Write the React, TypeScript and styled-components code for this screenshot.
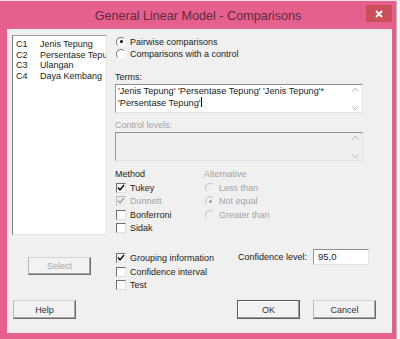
import React from 'react';
import styled, { createGlobalStyle } from 'styled-components';

const GlobalStyle = createGlobalStyle`
    html, body {
        margin: 0;
        padding: 0;
    }
    body {
        width: 400px;
        height: 339px;
        overflow: hidden;
        background: #e6608e;
        font-family: "Liberation Sans", Arial, sans-serif;
        font-size: 9px;
        color: #222;
    }
`;

const Screen = styled.div`
    display: flex;
    flex-direction: column;
    width: 400px;
    height: 339px;
`;

const TopEdge = styled.div`
    height: 1px;
    background: #eee3e8;
`;

const Row = styled.div`
    display: flex;
    flex: 1;
`;

const Frame = styled.div`
    width: 396px;
    display: flex;
    flex-direction: column;
    background: #e6608e;
`;

const OuterStrip = styled.div`
    flex: 1;
    border-left: 1px solid #b9b1b5;
    background: #f3f1f2;
`;

const TitleBar = styled.div`
    height: 28px;
    display: grid;
    grid-template-columns: 1fr auto 1fr;
    align-items: center;
`;

const Title = styled.div`
    grid-column: 2;
    font-size: 12.6px;
    color: #5e2a40;
    padding-top: 1px;
`;

const CloseButton = styled.div`
    justify-self: end;
    align-self: start;
    margin-top: 4px;
    margin-right: 4px;
    width: 26px;
    height: 17px;
    background: #c9505a;
    color: #fff;
    display: flex;
    align-items: center;
    justify-content: center;
`;

const Client = styled.div`
    flex: 1;
    margin: 0 4px 6px 7px;
    background: #f0f0f0;
    display: flex;
    flex-direction: column;
`;

const Main = styled.div`
    height: 271px;
    box-sizing: border-box;
    padding: 6px 0 0 5px;
    display: flex;
`;

const LeftCol = styled.div`
    width: 95px;
    display: flex;
    flex-direction: column;
`;

const ListBox = styled.div`
    height: 200px;
    box-sizing: border-box;
    background: #fff;
    border: 1px solid;
    border-color: #9c9c9c #e2e2e2 #e2e2e2 #7c7c7c;
    padding: 3px 0 0 3px;
    overflow: hidden;
`;

const ListItem = styled.div`
    display: grid;
    grid-template-columns: 24px 1fr;
    line-height: 10.5px;
    white-space: nowrap;
    overflow: hidden;
    font-size: 9px;
`;

const Button = styled.div<{ $default?: boolean; $disabled?: boolean }>`
    width: 63px;
    height: 19px;
    box-sizing: border-box;
    display: flex;
    align-items: center;
    justify-content: center;
    background: #f2f2f2;
    border: 1px solid;
    border-color: ${p => (p.$default ? '#5a5a5a' : '#d4d4d4 #6c6c6c #6c6c6c #b8b8b8')};
    box-shadow: ${p => (p.$default ? 'inset -1px -1px 0 #9a9a9a, inset 1px 1px 0 #fff' : 'inset -1px -1px 0 #a6a6a6')};
    color: ${p => (p.$disabled ? '#a5a5a5' : '#333')};
`;

const SelectButton = styled(Button)`
    height: 18px;
    margin: 22px 0 0 16px;
`;

const RightCol = styled.div`
    margin-left: 8px;
    width: 256px;
    display: flex;
    flex-direction: column;
`;

const Option = styled.div<{ $disabled?: boolean }>`
    height: 13px;
    display: flex;
    align-items: center;
    gap: 4px;
    padding-left: 1px;
    white-space: nowrap;
    color: ${p => (p.$disabled ? '#a3a3a3' : '#222')};
`;

const RadioGroup = styled.div`
    margin-top: 0.5px;
    display: flex;
    flex-direction: column;
    & > div {
        height: 12px;
    }
`;

const RadioMark = styled.span<{ $checked?: boolean; $disabled?: boolean }>`
    width: 10px;
    height: 10px;
    box-sizing: border-box;
    border-radius: 50%;
    border: 1px solid;
    border-color: ${p => (p.$disabled ? '#c4c4c4 #f6f6f6 #f6f6f6 #c4c4c4' : '#7a7a7a #fafafa #fafafa #7a7a7a')};
    background: ${p => (p.$disabled ? '#f0f0f0' : '#fff')};
    display: flex;
    align-items: center;
    justify-content: center;
    &::after {
        content: '';
        width: 3px;
        height: 3px;
        border-radius: 50%;
        background: ${p => (p.$checked ? (p.$disabled ? '#9c9c9c' : '#000') : 'transparent')};
    }
`;

const CheckMark = styled.span<{ $disabled?: boolean }>`
    width: 10px;
    height: 10px;
    box-sizing: border-box;
    border: 1px solid;
    border-color: ${p => (p.$disabled ? '#b8b8b8 #e8e8e8 #e8e8e8 #b8b8b8' : '#6e6e6e #e0e0e0 #e0e0e0 #6e6e6e')};
    background: ${p => (p.$disabled ? '#f0f0f0' : '#fff')};
    display: flex;
    align-items: center;
    justify-content: center;
`;

const Label = styled.div<{ $disabled?: boolean }>`
    height: 12px;
    line-height: 12px;
    color: ${p => (p.$disabled ? '#a3a3a3' : '#222')};
`;

const TermsLabel = styled(Label)`
    margin-top: 11px;
`;

const ControlLabel = styled(Label)`
    margin-top: 6px;
`;

const Field = styled.div<{ $disabled?: boolean }>`
    margin-top: 1px;
    width: 248px;
    height: 29px;
    box-sizing: border-box;
    background: ${p => (p.$disabled ? '#efefef' : '#fff')};
    border: 1px solid;
    border-color: #8e8e8e #e4e4e4 #e4e4e4 #9a9a9a;
    display: flex;
`;

const FieldText = styled.div`
    flex: 1;
    padding: 0 0 0 2px;
    line-height: 12px;
    font-size: 9.2px;
`;

const Caret = styled.span`
    display: inline-block;
    width: 1px;
    height: 10px;
    background: #000;
    vertical-align: -1px;
`;

const Scroller = styled.div`
    width: 14px;
    display: flex;
    flex-direction: column;
    justify-content: space-between;
    align-items: center;
    padding: 2px 0 1px;
`;

const MethodGrid = styled.div`
    margin-top: 7px;
    display: grid;
    grid-template-columns: 89px 1fr;
`;

const OptionList = styled.div`
    display: flex;
    flex-direction: column;
    margin-top: 2px;
    & > div {
        height: 13.3px;
    }
`;

const Bottom = styled.div`
    margin-top: 15px;
    display: grid;
    grid-template-columns: 123px auto 1fr;
    align-items: start;
`;

const ConfLabel = styled.div`
    height: 13px;
    line-height: 13px;
    padding-top: 1px;
    width: 75px;
`;

const ConfInput = styled.div`
    width: 56px;
    height: 16px;
    box-sizing: border-box;
    margin-top: -1px;
    background: #fff;
    border: 1px solid;
    border-color: #8e8e8e #e4e4e4 #e4e4e4 #9a9a9a;
    padding: 0 4px;
    line-height: 14px;
    font-size: 9.5px;
`;

const Footer = styled.div`
    display: flex;
    align-items: center;
    gap: 13px;
    padding: 0 16px 0 6px;
`;

const Spacer = styled.div`
    flex: 1;
`;

const Chevron = ({ up }: { up?: boolean }) => (
    <svg width="7" height="5" viewBox="0 0 7 5">
        <path d={up ? 'M0.5 4.5 L3.5 1 L6.5 4.5' : 'M0.5 0.5 L3.5 4 L6.5 0.5'} stroke="#b4b4b4" strokeWidth="1" fill="none" />
    </svg>
);

const Tick = ({ disabled }: { disabled?: boolean }) => (
    <svg width="8" height="8" viewBox="0 0 8 8">
        <path d="M1 3.5 L3 6 L7 1" stroke={disabled ? '#9e9e9e' : '#000'} strokeWidth="1.4" fill="none" />
    </svg>
);

const Radio = ({ label, checked, disabled }: { label: string; checked?: boolean; disabled?: boolean }) => (
    <Option $disabled={disabled}>
        <RadioMark $checked={checked} $disabled={disabled} />
        {label}
    </Option>
);

const Check = ({ label, checked, disabled }: { label: string; checked?: boolean; disabled?: boolean }) => (
    <Option $disabled={disabled}>
        <CheckMark $disabled={disabled}>{checked && <Tick disabled={disabled} />}</CheckMark>
        {label}
    </Option>
);

const columns = [
    ['C1', 'Jenis Tepung'],
    ['C2', 'Persentase Tepung'],
    ['C3', 'Ulangan'],
    ['C4', 'Daya Kembang'],
];

const App: React.FC = () => {
    return (
        <Screen>
            <GlobalStyle />
            <TopEdge />
            <Row>
                <Frame>
                    <TitleBar>
                        <Title>General Linear Model - Comparisons</Title>
                        <CloseButton>
                            <svg width="8" height="8" viewBox="0 0 8 8">
                                <path d="M1 1 L7 7 M7 1 L1 7" stroke="#fff" strokeWidth="1.8" />
                            </svg>
                        </CloseButton>
                    </TitleBar>
                    <Client>
                        <Main>
                            <LeftCol>
                                <ListBox>
                                    {columns.map(([id, name]) => (
                                        <ListItem key={id}>
                                            <span>{id}</span>
                                            <span>{name}</span>
                                        </ListItem>
                                    ))}
                                </ListBox>
                                <SelectButton $disabled>Select</SelectButton>
                            </LeftCol>
                            <RightCol>
                                <RadioGroup>
                                    <Radio label="Pairwise comparisons" checked />
                                    <Radio label="Comparisons with a control" />
                                </RadioGroup>
                                <TermsLabel>Terms:</TermsLabel>
                                <Field>
                                    <FieldText>
                                        'Jenis Tepung' 'Persentase Tepung' 'Jenis Tepung'*
                                        <br />
                                        'Persentase Tepung'<Caret />
                                    </FieldText>
                                    <Scroller>
                                        <Chevron up />
                                        <Chevron />
                                    </Scroller>
                                </Field>
                                <ControlLabel $disabled>Control levels:</ControlLabel>
                                <Field $disabled>
                                    <FieldText />
                                    <Scroller>
                                        <Chevron up />
                                        <Chevron />
                                    </Scroller>
                                </Field>
                                <MethodGrid>
                                    <Label>Method</Label>
                                    <Label $disabled>Alternative</Label>
                                    <OptionList>
                                        <Check label="Tukey" checked />
                                        <Check label="Dunnett" checked disabled />
                                        <Check label="Bonferroni" />
                                        <Check label="Sidak" />
                                    </OptionList>
                                    <OptionList>
                                        <Radio label="Less than" disabled />
                                        <Radio label="Not equal" checked disabled />
                                        <Radio label="Greater than" disabled />
                                    </OptionList>
                                </MethodGrid>
                                <Bottom>
                                    <OptionList>
                                        <Check label="Grouping information" checked />
                                        <Check label="Confidence interval" />
                                        <Check label="Test" />
                                    </OptionList>
                                    <ConfLabel>Confidence level:</ConfLabel>
                                    <ConfInput>95,0</ConfInput>
                                </Bottom>
                            </RightCol>
                        </Main>
                        <Footer>
                            <Button>Help</Button>
                            <Spacer />
                            <Button $default>OK</Button>
                            <Button>Cancel</Button>
                        </Footer>
                    </Client>
                </Frame>
                <OuterStrip />
            </Row>
        </Screen>
    );
};

export default App;
